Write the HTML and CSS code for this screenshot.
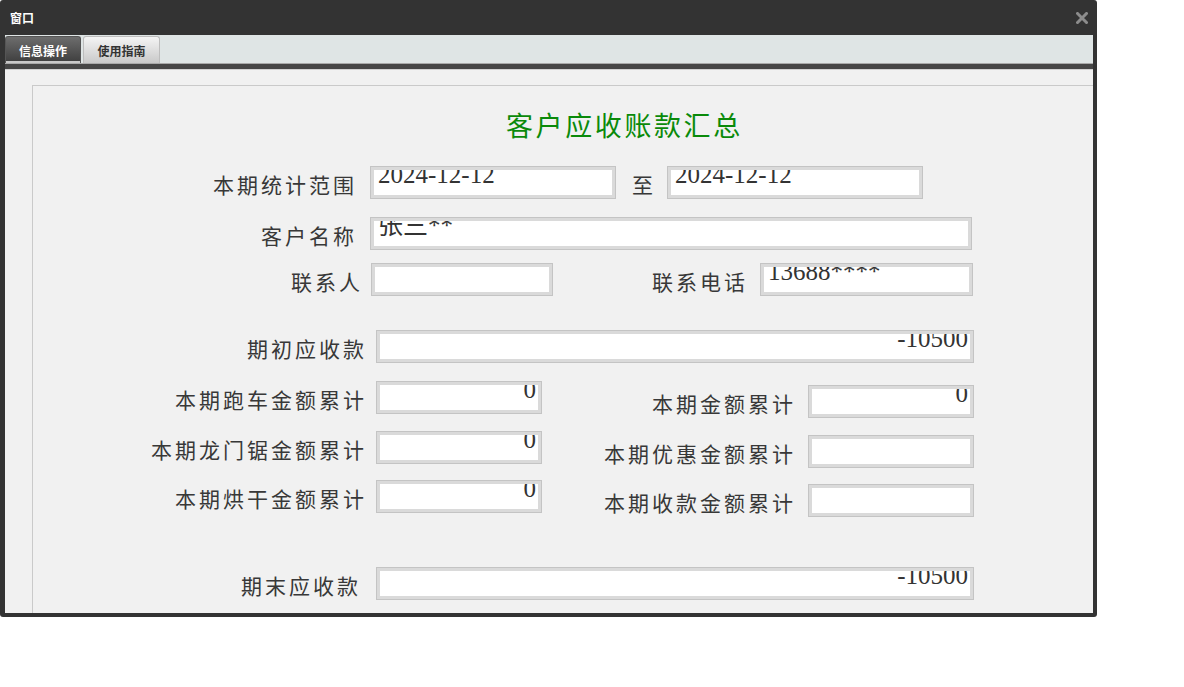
FILE: index.html
```html
<!DOCTYPE html>
<html lang="zh-CN">
<head>
    <meta charset="UTF-8">
    <title>窗口</title>
    <link rel="stylesheet" href="styles.css">
</head>
<body>

    <div class="window">
        <div class="titlebar">
            <span class="title">窗口</span>
            <svg class="close" width="12" height="12" viewBox="0 0 12 12">
                <path d="M1.5 1.5 L10.5 10.5 M10.5 1.5 L1.5 10.5" stroke="#8c8c8c" stroke-width="3" stroke-linecap="square"/>
            </svg>
        </div>
        <div class="frame">
            <div class="tabs">
                <span class="tab active">信息操作</span>
                <span class="tab">使用指南</span>
            </div>
            <div class="tabline"></div>
            <div class="content">
                <div class="panel">
                    <h2 class="heading">客户应收账款汇总</h2>

                    <div class="row r1">
                        <span class="label">本期统计范围</span>
                        <div class="field w244">2024-12-12</div>
                        <span class="sep">至</span>
                        <div class="field w254">2024-12-12</div>
                    </div>

                    <div class="row r2">
                        <span class="label">客户名称</span>
                        <div class="field w600">张三**</div>
                    </div>

                    <div class="row r3">
                        <span class="label w330">联系人</span>
                        <div class="field w180"></div>
                        <span class="label second w196">联系电话</span>
                        <div class="field w211">13688****</div>
                    </div>

                    <div class="row r4">
                        <span class="label w334">期初应收款</span>
                        <div class="field w596 num">-10500</div>
                    </div>

                    <div class="row r5">
                        <span class="label w334">本期跑车金额累计</span>
                        <div class="field w164 num">0</div>
                        <div class="pair">
                            <span class="label second w255">本期金额累计</span>
                            <div class="field w164 num">0</div>
                        </div>
                    </div>

                    <div class="row r6">
                        <span class="label w334">本期龙门锯金额累计</span>
                        <div class="field w164 num">0</div>
                        <div class="pair">
                            <span class="label second w255">本期优惠金额累计</span>
                            <div class="field w164 num"></div>
                        </div>
                    </div>

                    <div class="row r7">
                        <span class="label w334">本期烘干金额累计</span>
                        <div class="field w164 num">0</div>
                        <div class="pair">
                            <span class="label second w255">本期收款金额累计</span>
                            <div class="field w164 num"></div>
                        </div>
                    </div>

                    <div class="row r8">
                        <span class="label w328">期末应收款</span>
                        <div class="field w596 num">-10500</div>
                    </div>
                </div>
            </div>
        </div>
    </div>

</body>
</html>
```

FILE: styles.css
```css
body {
    margin: 0;
    padding: 0;
    background-color: #fff;
    font-family: "Noto Sans CJK SC", sans-serif;
}
.window {
    width: 1097px;
    height: 617px;
    background-color: #333;
    border-radius: 3px;
    display: flex;
    flex-direction: column;
    overflow: hidden;
}
.titlebar {
    height: 35px;
    display: flex;
    align-items: center;
    justify-content: space-between;
    padding: 0 9px 0 10px;
}
.title {
    color: #fff;
    font-size: 12px;
    font-weight: bold;
}
.close {
    margin-top: 1px;
}
.frame {
    flex: 1;
    display: flex;
    flex-direction: column;
    margin: 0 4px 4px 5px;
    min-height: 0;
}
.tabs {
    height: 29px;
    background-color: #dfe5e5;
    border-bottom: 1px solid #a9a9a9;
    display: flex;
    align-items: flex-end;
    gap: 2px;
    box-sizing: border-box;
}
.tab {
    width: 77px;
    height: 27px;
    box-sizing: border-box;
    font-size: 12px;
    font-weight: bold;
    color: #333;
    display: flex;
    align-items: center;
    justify-content: center;
    border: 1px solid #bdbdbd;
    border-bottom: none;
    border-radius: 3px 3px 0 0;
    background: linear-gradient(#f4f4f4, #c9c9c9);
}
.tab.active {
    width: 76px;
    color: #fff;
    border-color: #555;
    background: linear-gradient(#6d6d6d, #3d3d3d);
    box-shadow: inset 0 -2px 0 #c8c8c8;
}
.tabline {
    height: 5px;
    background-color: #464646;
}
.content {
    flex: 1;
    background-color: #f1f1f1;
    border-top: 1px solid #d2d2d2;
    padding: 15px 0 0 27px;
    overflow: hidden;
}
.panel {
    border-top: 1px solid #cacaca;
    border-left: 1px solid #cacaca;
    height: 600px;
    display: flex;
    flex-direction: column;
}
.heading {
    margin: 19px 0 0 0;
    padding-left: 473px;
    height: 40px;
    line-height: 40px;
    font-size: 27px;
    font-weight: normal;
    letter-spacing: 2.6px;
    color: #0a8a0a;
}
.row {
    display: flex;
    align-items: center;
    height: 31px;
}
.r1 { margin-top: 22px; }
.r2 { margin-top: 20px; }
.r3 { margin-top: 15px; }
.r4 { margin-top: 36px; }
.r5 { margin-top: 20px; }
.r6 { margin-top: 19px; }
.r7 { margin-top: 18px; }
.r8 { margin-top: 56px; }

.label {
    width: 324px;
    margin-right: 14px;
    text-align: right;
    font-size: 21px;
    letter-spacing: 3px;
    color: #383838;
    line-height: 31px;
    padding-top: 3px;
    white-space: nowrap;
}
.label.w330 { width: 330px; margin-right: 9px; }
.label.w334 { width: 334px; margin-right: 10px; }
.label.w328 { width: 328px; margin-right: 16px; }
.label.second.w196 { width: 196px; margin-right: 13px; }
.label.second.w255 { width: 255px; margin-right: 13px; }

.pair {
    display: flex;
    align-items: center;
    margin-top: 8px;
}
.sep {
    font-size: 21px;
    color: #383838;
    margin: 3px 15px 0 17px;
}
.field {
    height: 31px;
    box-sizing: border-box;
    background-color: #fff;
    border: 3px solid #dadada;
    box-shadow: 0 0 0 1px #c4c4c4;
    padding: 0 2px 0 4px;
    font-family: "Liberation Serif", "Times New Roman", "Noto Sans CJK SC", serif;
    font-size: 25px;
    line-height: 9px;
    color: #333;
    overflow: hidden;
    white-space: nowrap;
}
.field.num {
    text-align: right;
}
.w164 { width: 164px; }
.w180 { width: 180px; }
.w211 { width: 211px; }
.w244 { width: 244px; }
.w254 { width: 254px; }
.w596 { width: 596px; }
.w600 { width: 600px; }
```
